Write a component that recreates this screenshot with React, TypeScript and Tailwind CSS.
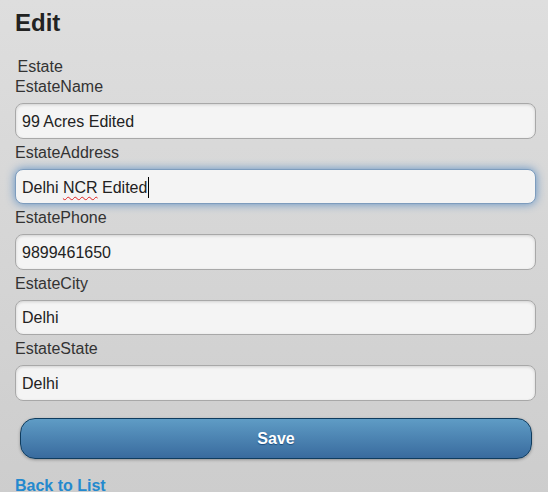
const fields = [
  { label: "EstateName", value: "99 Acres Edited" },
  { label: "EstateAddress", value: "Delhi NCR Edited", focused: true },
  { label: "EstatePhone", value: "9899461650" },
  { label: "EstateCity", value: "Delhi" },
  { label: "EstateState", value: "Delhi" },
];

const Field = ({
  label,
  value,
  focused,
  first,
}: {
  label: string;
  value: string;
  focused?: boolean;
  first?: boolean;
}) => (
  <div className="flex flex-col">
    <label
      className={`${first ? "" : "pt-[4px]"} pb-[6px] text-[16px] leading-[20px] text-[#333]`}
    >
      {label}
    </label>
    {focused ? (
      <div className="flex h-[35.5px] w-[520.5px] items-start rounded-[8px] border border-[#7d9cbd] bg-[#f4f4f4] pl-[6px] pt-[8px] text-[16px] leading-[20px] text-[#222] shadow-[0_0_10px_#5d8fc4]">
        <span>
          Delhi{" "}
          <span className="underline decoration-wavy decoration-[#e02020] decoration-1 underline-offset-[3px]">
            NCR
          </span>{" "}
          Edited
        </span>
        <span className="ml-px mt-[-1px] h-[21px] w-px bg-black" />
      </div>
    ) : (
      <input
        readOnly
        defaultValue={value}
        className="h-[35.5px] w-[520.5px] rounded-[8px] border border-[#a8a8a8] bg-[#f4f4f4] pl-[6px] pt-[2px] text-[16px] leading-[20px] text-[#222] shadow-[inset_0_1px_3px_rgba(0,0,0,0.15)] outline-none"
      />
    )}
  </div>
);

export default function App() {
  return (
    <div className="min-h-[492px] w-full bg-gradient-to-b from-[#dedede] to-[#cdcdcd] px-[15px] font-['Liberation_Sans',Arial,sans-serif]">
      <h2 className="pt-[8px] text-[24px] font-bold leading-[30px] text-[#222]">
        Edit
      </h2>
      <div className="mt-[19px] flex flex-col">
        <div className="pl-[2.5px] text-[16px] leading-[20px] text-[#333]">
          Estate
        </div>
        {fields.map((f, i) => (
          <Field key={f.label} {...f} first={i === 0} />
        ))}
      </div>
      <button className="ml-[5px] mt-[17.5px] flex h-[41px] w-[512px] items-center justify-center rounded-[15px] border border-[#0f3c5e] bg-gradient-to-b from-[#5f9cc5] to-[#396b9e] text-[16px] font-bold text-white [text-shadow:0_1px_1px_#194b7e] shadow-[0_1px_3px_rgba(0,0,0,0.3)]">
        Save
      </button>
      <a
        href="#"
        className="mt-[17px] block text-[16px] font-bold leading-[20px] text-[#2489ce]"
      >
        Back to List
      </a>
    </div>
  );
}
